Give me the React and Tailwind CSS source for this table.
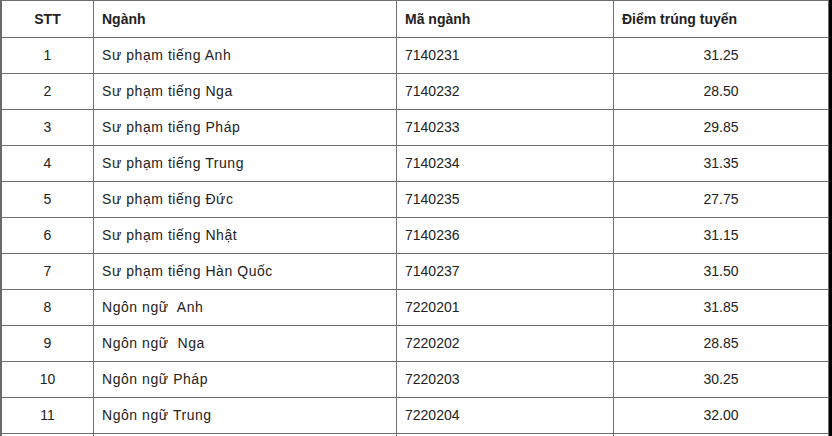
import React from "react";

const rows = [
  ["1", "Sư phạm tiếng Anh", "7140231", "31.25"],
  ["2", "Sư phạm tiếng Nga", "7140232", "28.50"],
  ["3", "Sư phạm tiếng Pháp", "7140233", "29.85"],
  ["4", "Sư phạm tiếng Trung", "7140234", "31.35"],
  ["5", "Sư phạm tiếng Đức", "7140235", "27.75"],
  ["6", "Sư phạm tiếng Nhật", "7140236", "31.15"],
  ["7", "Sư phạm tiếng Hàn Quốc", "7140237", "31.50"],
  ["8", "Ngôn ngữ\u00a0 Anh", "7220201", "31.85"],
  ["9", "Ngôn ngữ\u00a0 Nga", "7220202", "28.85"],
  ["10", "Ngôn ngữ Pháp", "7220203", "30.25"],
  ["11", "Ngôn ngữ Trung", "7220204", "32.00"],
  ["", "", "", ""],
];

const grid = "grid grid-cols-[92px_303px_217px_215px]";
const cell = "border-r border-[#6f6f6f] flex items-center";

export default function App() {
  return (
    <div
      className="w-[832px] h-[436px] overflow-hidden bg-white flex text-[14px] text-[#222]"
      style={{ fontFamily: '"Liberation Sans", Arial, sans-serif' }}
    >
      <div className="w-[2px] shrink-0 bg-[#6a6a6a]" />
      <div className="w-[827px] shrink-0 flex flex-col">
        <div className={`${grid} h-[38px] shrink-0 border-t border-b border-[#6f6f6f] font-bold`}>
          <div className={`${cell} justify-center`}>STT</div>
          <div className={`${cell} pl-[8px]`}>Ngành</div>
          <div className={`${cell} pl-[8px]`}>Mã ngành</div>
          <div className={`${cell} pl-[8px]`}>Điểm trúng tuyển</div>
        </div>
        {rows.map((r, i) => (
          <div key={i} className={`${grid} h-[36px] shrink-0 border-b border-[#6f6f6f]`}>
            <div className={`${cell} justify-center`}>{r[0]}</div>
            <div className={`${cell} pl-[8px] tracking-[0.55px]`}>{r[1]}</div>
            <div className={`${cell} pl-[8px]`}>{r[2]}</div>
            <div className={`${cell} justify-center`}>{r[3]}</div>
          </div>
        ))}
      </div>
      <div className="w-[3px] shrink-0 bg-black" />
    </div>
  );
}
